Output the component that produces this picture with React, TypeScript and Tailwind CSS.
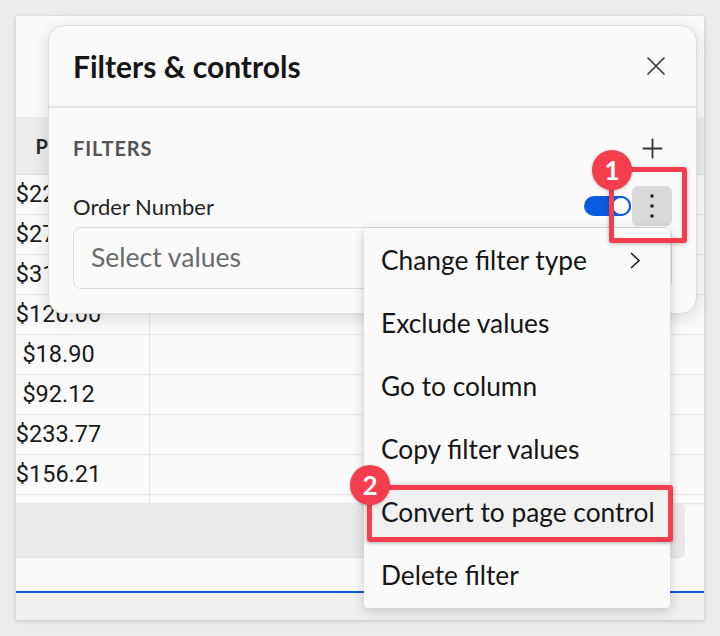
import { X, Plus } from "lucide-react"

const prices = [
  "$224.50",
  "$271.30",
  "$318.45",
  "$120.00",
  "$18.90",
  "$92.12",
  "$233.77",
  "$156.21"
]

const menuItems = [
  "Change filter type",
  "Exclude values",
  "Go to column",
  "Copy filter values",
  "Convert to page control",
  "Delete filter"
]

const Badge = ({ n, className }: { n: number; className: string }) => (
  <div
    className={`absolute flex h-10 w-10 items-center justify-center rounded-full bg-[#f43e4e] text-[26px] font-bold leading-none text-white shadow-[0_1px_3px_rgba(0,0,0,0.25)] ${className}`}
  >
    {n}
  </div>
)

const App = () => {
  return (
    <div className="relative h-[636px] w-[720px] overflow-hidden bg-[#ebebeb] p-4 font-['Lato',sans-serif]">
      {/* page behind the dialog */}
      <div className="flex h-[604px] w-[688px] flex-col overflow-hidden bg-[#fafafa] shadow-[0_1px_4px_rgba(0,0,0,0.18)]">
        <div className="h-[101px] shrink-0" />
        <div className="flex h-[58px] shrink-0 border-b border-[#dcdcdc] bg-[#ececec]">
          <div className="flex w-[134px] items-center justify-center pr-[50px] text-[20px] font-bold text-[#2a2a2a]">
            Price
          </div>
        </div>
        {prices.map((p) => (
          <div key={p} className="flex h-[40px] shrink-0 border-b border-[#e4e4e4]">
            <div className="flex w-[134px] items-center justify-center border-r border-[#e2e2e2] pr-[48px] font-['Roboto',sans-serif] text-[23.5px] text-[#1a1a1a]">
              {p}
            </div>
          </div>
        ))}
        <div className="flex h-[8px] shrink-0 shadow-[0_1px_2px_rgba(0,0,0,0.1)]">
          <div className="w-[134px] border-r border-[#e2e2e2]" />
        </div>
        <div className="mr-[19px] h-[55px] shrink-0 rounded-r-[6px] border-b border-[#dedede] bg-[#e9e9e9]" />
        <div className="h-[33px] shrink-0" />
        <div className="h-[2px] shrink-0 bg-[#0b5bd8]" />
        <div className="flex-1 bg-[#f0f0f0]" />
      </div>

      {/* Filters & controls dialog */}
      <div className="absolute left-[48px] top-[25px] w-[649px] rounded-[16px] border border-[#dcdcdc] bg-[#fafafa] shadow-[0_4px_18px_rgba(0,0,0,0.13)]">
        <div className="flex h-[80px] items-center justify-between pl-6 pr-5">
          <h2 className="text-[30px] font-bold text-[#161616]">Filters &amp; controls</h2>
          <button className="flex h-10 w-10 items-center justify-center text-[#333]">
            <X size={32} strokeWidth={1.2} />
          </button>
        </div>
        <div className="h-[2px] bg-[#e3e3e3]" />
        <div className="px-6 pb-[24px] pt-5">
          <div className="flex h-10 items-center justify-between">
            <span className="text-[20px] font-bold tracking-[0.9px] text-[#555]">FILTERS</span>
            <button className="flex h-10 w-10 items-center justify-center text-[#333]">
              <Plus size={31} strokeWidth={1.4} />
            </button>
          </div>
          <div className="mt-[18px] flex h-10 items-center justify-between">
            <span className="text-[22px] text-[#222]">Order Number</span>
            <div className="flex items-center gap-[1px]">
              <div className="flex h-5 w-[47px] items-center justify-end rounded-full bg-[#0a5be0]">
                <div className="h-5 w-5 rounded-full border-2 border-[#0a5be0] bg-white" />
              </div>
              <button className="flex h-10 w-10 items-center justify-center rounded-[6px] bg-[#d9d9d9]">
                <svg width="4" height="24" viewBox="0 0 4 24">
                  <circle cx="2" cy="2" r="1.8" fill="#222" />
                  <circle cx="2" cy="12" r="1.8" fill="#222" />
                  <circle cx="2" cy="22" r="1.8" fill="#222" />
                </svg>
              </button>
            </div>
          </div>
          <div className="mt-[1px] flex h-[62px] items-center rounded-[8px] border border-[#dadada] bg-[#fafafa] px-[17px] text-[26.5px] text-[#6b6b6b]">
            Select values
          </div>
        </div>
      </div>

      {/* dropdown menu */}
      <div className="absolute left-[364px] top-[228px] w-[306px] rounded-[4px] bg-[#fafafa] py-[1px] shadow-[0_3px_12px_rgba(0,0,0,0.2)]">
        {menuItems.map((item, i) => (
          <div
            key={item}
            className={`flex h-[63px] items-center justify-between whitespace-nowrap pl-[17px] pr-[30px] text-[26.3px] text-[#151515] ${
              i == 4 ? "bg-[#f1f1f1]" : ""
            }`}
          >
            <span>{item}</span>
            {i == 0 && (
              <svg width="10" height="17" viewBox="0 0 10 17" fill="none">
                <path d="M1 1l8 7.5L1 16" stroke="#222" strokeWidth="1.6" />
              </svg>
            )}
          </div>
        ))}
      </div>

      {/* annotations */}
      <div className="absolute left-[609px] top-[167px] h-[76px] w-[78px] rounded-[3px] border-[5px] border-[#f43e4e] shadow-[0_1px_4px_rgba(0,0,0,0.25)]" />
      <Badge n={1} className="left-[592px] top-[150px]" />
      <div className="absolute left-[367px] top-[485px] h-[57px] w-[306px] rounded-[3px] border-[5px] border-[#f43e4e] shadow-[0_1px_4px_rgba(0,0,0,0.25)]" />
      <Badge n={2} className="left-[350px] top-[465px]" />
    </div>
  )
}

export default App
